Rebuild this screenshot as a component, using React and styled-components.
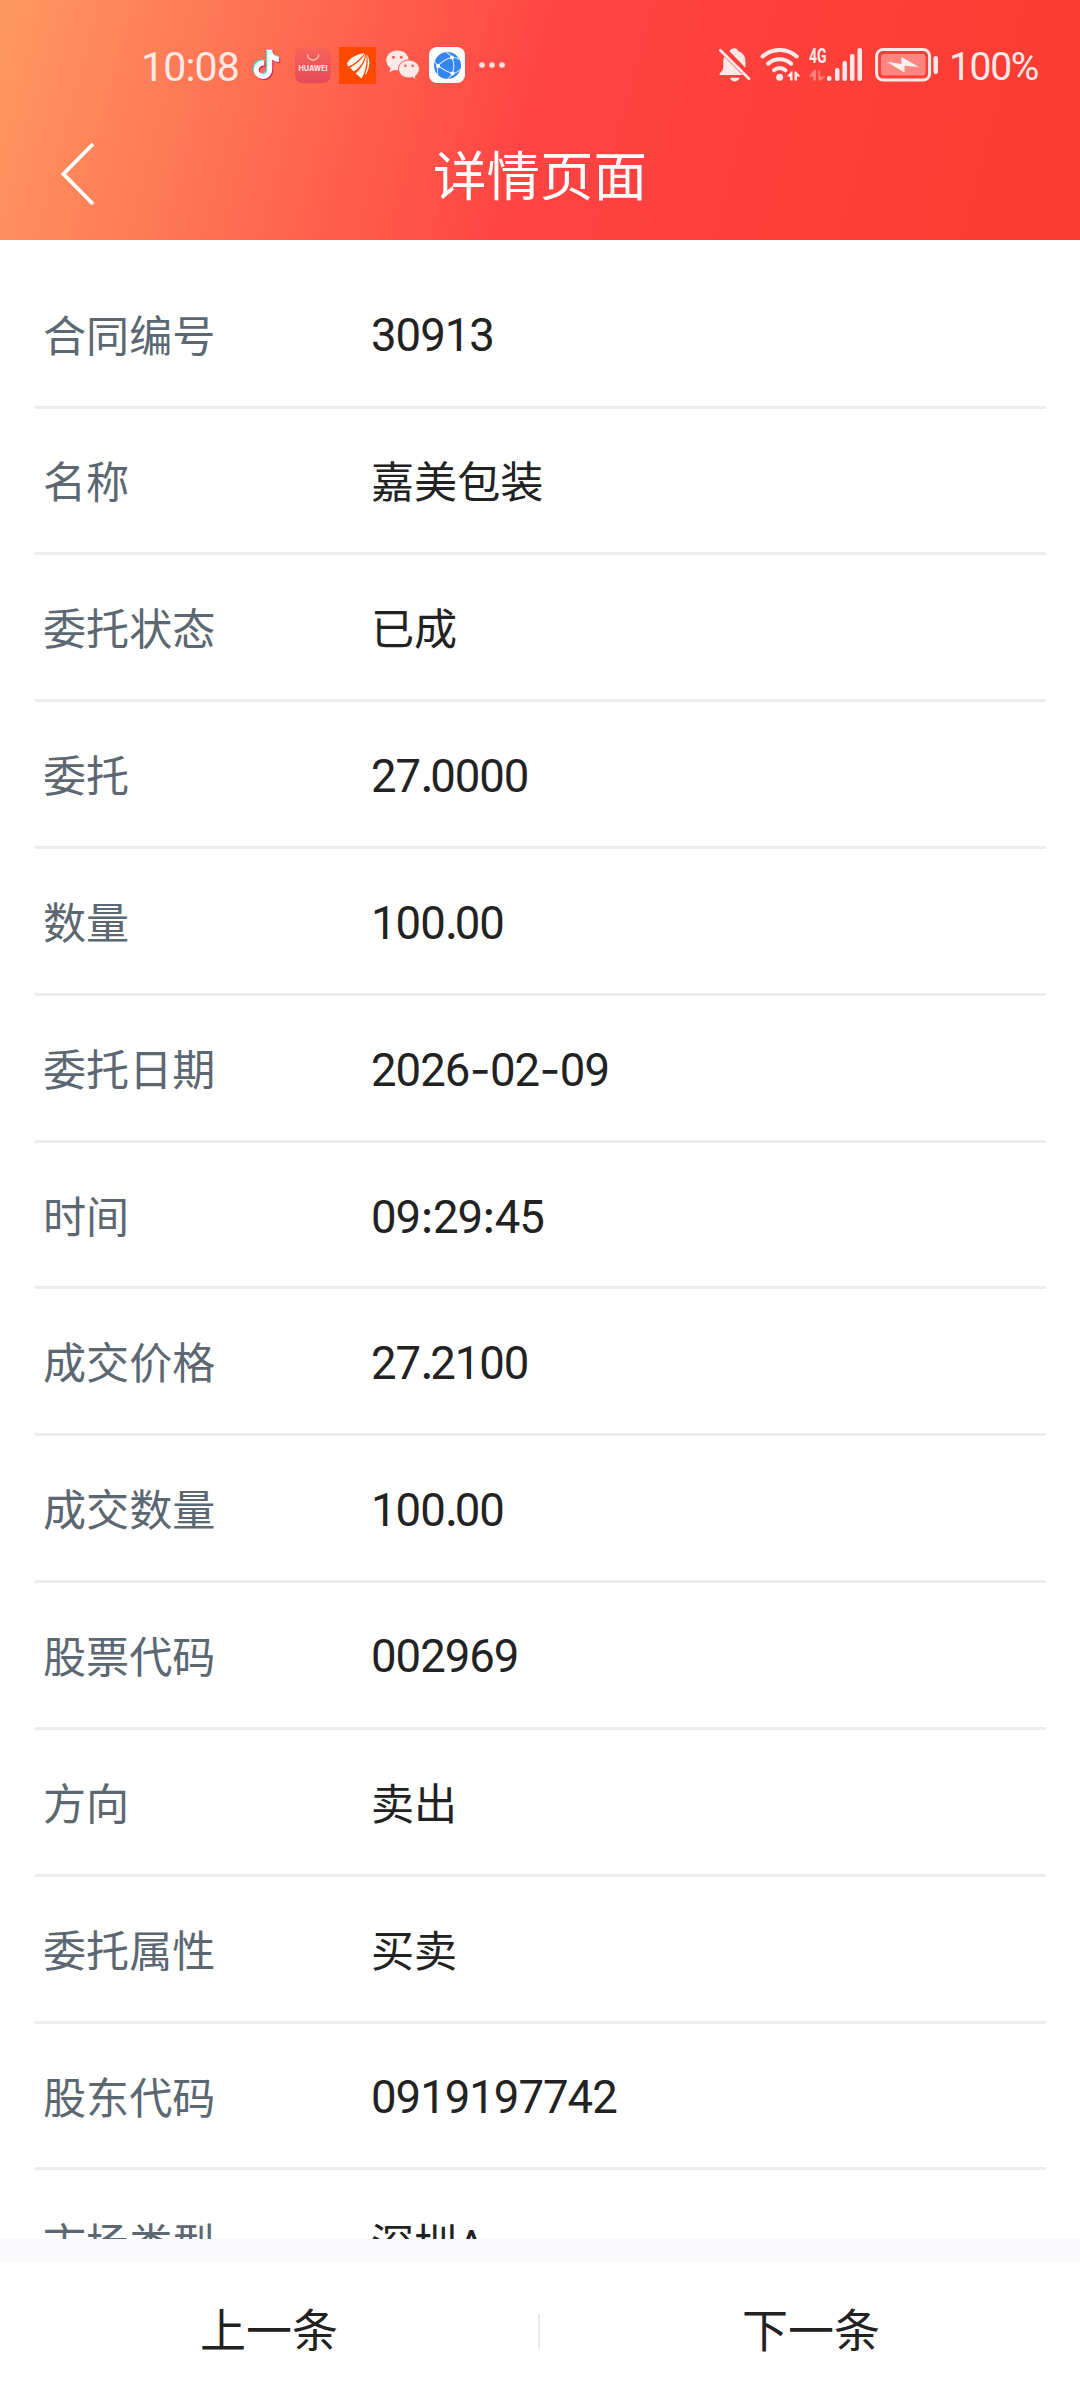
import React from 'react';
import styled, { createGlobalStyle } from 'styled-components';
import { FaTiktok } from 'react-icons/fa';

const details = [
    { label: '合同编号', value: '30913' },
    { label: '名称', value: '嘉美包装' },
    { label: '委托状态', value: '已成' },
    { label: '委托', value: '27.0000' },
    { label: '数量', value: '100.00' },
    { label: '委托日期', value: '2026-02-09' },
    { label: '时间', value: '09:29:45' },
    { label: '成交价格', value: '27.2100' },
    { label: '成交数量', value: '100.00' },
    { label: '股票代码', value: '002969' },
    { label: '方向', value: '卖出' },
    { label: '委托属性', value: '买卖' },
    { label: '股东代码', value: '0919197742' },
    { label: '市场类型', value: '深圳A' },
];

const HuaweiIcon = () => (
    <svg width="36" height="36" viewBox="0 0 36 36">
        <defs>
            <linearGradient id="huawei" x1="0" y1="0" x2="0" y2="1">
                <stop offset="0" stopColor="#f8655a" />
                <stop offset="1" stopColor="#e54a58" />
            </linearGradient>
        </defs>
        <rect width="36" height="36" rx="8" fill="url(#huawei)" />
        <path d="M12.5 7.5a5.6 5.6 0 0 0 11.2 0" fill="none" stroke="#ffc9c4" strokeWidth="1.3" />
        <text x="3.5" y="24" textLength="29" lengthAdjust="spacingAndGlyphs" fill="#ffe9e6" fontFamily="Inter, sans-serif" fontWeight="700" fontSize="7">HUAWEI</text>
    </svg>
);

const BrokerIcon = () => (
    <svg width="37" height="37" viewBox="0 0 37 37">
        <rect width="37" height="37" fill="#ff4800" />
        <path d="M25.500 6C19 7 11 10 8 16.500L9 19.500C14 18 21 12.500 25.500 6Z" fill="#fff6ee" />
        <path d="M26.300 6.500C23.500 12 17 17.500 11 20.500L14.500 24.500C20.500 21.500 25.500 14.500 26.300 6.500Z" fill="#fff6ee" />
        <path d="M27.200 7C26.500 14.500 22 22 16.500 26.500L22.500 31.500C26.500 25 28.500 15.500 27.200 7Z" fill="#fff6ee" />
        <path d="M28 7.500C29.500 14 28.500 22 25.800 28L27.500 26.500C31 20 31.500 13 28 7.500Z" fill="#fff6ee" />
    </svg>
);

const WechatIcon = () => (
    <svg width="34" height="30" viewBox="0 0 34 30">
        <path d="M11.500.5C5.200.5.300 4.800.300 10.300c0 3.200 1.600 5.900 4.200 7.700l-1.200 4.200 4.600-2.300c1.200.3 2.400.4 3.600.4 6.200 0 11.200-4.400 11.200-10S17.700.5 11.500.5Z" fill="#ffe9e6" />
        <path d="M23 10c-5.800 0-10.500 4-10.500 9s4.700 9 10.500 9c1.200 0 2.300-.2 3.300-.5l4 2-1-3.400c2.500-1.600 4.100-4.200 4.100-7.100 0-5-4.600-9-10.400-9Z" fill="#ffe9e6" stroke="#ff5a4c" strokeWidth="1" />
        <g fill="#ff5a4c">
            <circle cx="7.500" cy="7.300" r="1.500" />
            <circle cx="15.300" cy="7.300" r="1.500" />
            <circle cx="19.300" cy="15.700" r="1.300" />
            <circle cx="26.600" cy="15.700" r="1.300" />
        </g>
    </svg>
);

const BrowserIcon = () => (
    <svg width="36" height="36" viewBox="0 0 36 36">
        <rect width="36" height="36" rx="8" fill="#fff" />
        <circle cx="18.500" cy="18.500" r="13.500" fill="#3385f0" />
        <g fill="none" stroke="#d5e7ff" strokeWidth="1.100">
            <path d="M9 19C13 14 18 11.500 23 10.500" />
            <path d="M9 19C13 21.500 18 25 23.500 26.500" />
            <path d="M23 10.500C25 15 25.500 21 23.500 26.500" />
            <path d="M9 19C7 16.500 6 15 5.600 14.500M9 19C8 22 8 25 9 28" />
            <path d="M23 10.500C21 7.500 19 6 17 5M23 10.500C27 10.300 29 11 30.500 12.500" />
            <path d="M23.500 26.500C27 26 29.500 24.500 31 22.500M23.500 26.500C22 29 20.500 31 18.500 32" />
        </g>
        <g fill="#fff">
            <circle cx="9" cy="19" r="2" />
            <circle cx="23" cy="10.500" r="2" />
            <circle cx="23.500" cy="26.500" r="2" />
        </g>
    </svg>
);

const MuteIcon = () => (
    <svg width="32" height="34" viewBox="0 0 32 34">
        <path d="M10.500 3.300C11.500 1 13.500 .3 15.500.3s3 .9 3.600 2.700c5 1.700 7.400 5.500 7.400 10.500v6.300ZM5.200 8.500 23.500 27H.8C.3 26 .8 25 2 24c1.700-1.600 2.300-3 2.300-6V13c0-1.300.300-2.900.9-4.500Z" fill="#ffe9e8" />
        <path d="M1.300 2.300 30 30.800" stroke="#ffe9e8" strokeWidth="2.700" strokeLinecap="round" />
        <path d="M11 29.800h9.500c-.8 2.600-2.500 3.700-4.700 3.700s-4-1.100-4.800-3.700Z" fill="#ffe9e8" />
    </svg>
);

const WifiIcon = () => (
    <svg width="41" height="34" viewBox="0 0 41 34">
        <g fill="none" stroke="#ffe9e8" strokeWidth="4" strokeLinecap="round">
            <path d="M2.500 8.500C12.500-.2 27 -.2 36.800 8.500" />
            <path d="M8 15.700c7-6 16.300-6 23.300 0" />
            <path d="M14 22.300c3.500-3 8-3 11.500 0" />
        </g>
        <circle cx="19.600" cy="29.300" r="3.500" fill="#ffe9e8" />
        <path d="M27 28.500 31 23.500h1.500v9H30v-4ZM34.500 23.500H36l4.500 5H37v4h-2.500Z" fill="#ffe9e8" />
    </svg>
);

const SignalIcon = () => (
    <svg width="54" height="34" viewBox="0 0 54 34" overflow="visible">
        <text x="0" y="15" textLength="17.500" lengthAdjust="spacingAndGlyphs" fill="#ffe9e8" fontFamily="Roboto, sans-serif" fontWeight="700" fontSize="20">4G</text>
        <path d="M0 28.500 5 22h2v10.500H4.200v-4ZM9.500 22H11v6.500h5.500L11.500 32.500h-2Z" fill="#fff" opacity=".35" />
        <g fill="#ffe9e8">
            <rect x="18" y="28" width="4.500" height="5" rx="2" />
            <rect x="26" y="20" width="4.500" height="13" rx="2" />
            <rect x="33.500" y="13" width="4.500" height="20" rx="2" />
            <rect x="41" y="6" width="4.500" height="27" rx="2" />
            <rect x="48.500" y="0" width="4.500" height="33" rx="2" />
        </g>
    </svg>
);

const BatteryIcon = () => (
    <svg width="64" height="34" viewBox="0 0 64 34">
        <rect x="1.600" y="1.600" width="53" height="30.500" rx="6.500" fill="none" stroke="#ffe9e8" strokeWidth="3" />
        <rect x="6" y="6" width="44.500" height="21.500" rx="3" fill="#ff8580" />
        <path d="M11.500 13.700 26.500 16V9L44 19 29.500 17.800V24.500Z" fill="#ffefee" />
        <rect x="58.500" y="8" width="4.500" height="18" rx="2.200" fill="#ffe9e8" />
    </svg>
);

// widths of the punctuation between digits, in em
const marks = { '.': 0.220, ':': 0.280, '-': 0.455 };

const Numeric = ({ text }) => (
    <Digits>
        {text.split(/([-:.])/).map((part, idx) => (
            marks[part] ? <Mark key={idx} $width={marks[part]}>{part}</Mark> : part
        ))}
    </Digits>
);

const Value = ({ text }) => (
    <ValueText>
        {/^[\d.:-]+$/.test(text) ? <Numeric text={text} /> : text}
    </ValueText>
);

const App = () => {
    return (
        <Page>
            <GlobalStyle />
            <Header>
                <StatusBar>
                    <Side>
                        <Clock>10:08</Clock>
                        <Slot $gap={15}>
                            <Tiktok>
                                <FaTiktok color="#25f4ee" />
                                <FaTiktok color="#d8174e" />
                                <FaTiktok color="#fff" />
                            </Tiktok>
                        </Slot>
                        <Slot $gap={14}><HuaweiIcon /></Slot>
                        <Slot $gap={8}><BrokerIcon /></Slot>
                        <Slot $gap={10}><WechatIcon /></Slot>
                        <Slot $gap={9}><BrowserIcon /></Slot>
                        <Slot $gap={14}>
                            <svg width="26" height="6" viewBox="0 0 26 6" fill="#ffe4e2">
                                <circle cx="3" cy="3" r="2.800" />
                                <circle cx="13" cy="3" r="2.800" />
                                <circle cx="23" cy="3" r="2.800" />
                            </svg>
                        </Slot>
                    </Side>
                    <Side>
                        <MuteIcon />
                        <Slot $gap={9}><WifiIcon /></Slot>
                        <Slot $gap={8}><SignalIcon /></Slot>
                        <Slot $gap={12}><BatteryIcon /></Slot>
                        <Percent>100%</Percent>
                    </Side>
                </StatusBar>
                <NavBar>
                    <BackButton>
                        <svg width="34" height="62" viewBox="0 0 34 62">
                            <path d="M32 1 2.500 31 32 61" fill="none" stroke="#fff" strokeWidth="3.800" />
                        </svg>
                    </BackButton>
                    <Title>详情页面</Title>
                </NavBar>
            </Header>
            <List>
                {details.map((d, idx) => (
                    <Row key={idx}>
                        <Label>{d.label}</Label>
                        <Value text={d.value} />
                    </Row>
                ))}
            </List>
            <Footer>
                <FooterButton>上一条</FooterButton>
                <Divider />
                <FooterButton>下一条</FooterButton>
            </Footer>
        </Page>
    );
}

const GlobalStyle = createGlobalStyle`
  body {
    margin: 0;
    background-color: #fff;
  }
`;

const Page = styled.div`
  display: flex;
  flex-direction: column;
  width: 1080px;
  height: 2400px;
  overflow: hidden;
  background-color: #fff;
  font-family: Roboto, 'Noto Sans CJK SC', sans-serif;
`;

const Header = styled.div`
  flex: none;
  height: 240px;
  color: #fff;
  background: linear-gradient(105deg, #ff9860 0%, #ff4343 50%, #fa3b2f 100%);
`;

const StatusBar = styled.div`
  display: flex;
  justify-content: space-between;
  align-items: center;
  box-sizing: border-box;
  height: 108px;
  padding: 22px 42px 0 141px;
`;

const Side = styled.div`
  display: flex;
  align-items: center;
  & svg {
    display: block;
    flex: none;
  }
`;

const Slot = styled.div`
  flex: none;
  margin-left: ${(props) => props.$gap}px;
`;

const Digits = styled.span`
  display: inline-block;
  white-space: nowrap;
`;

const Mark = styled.span`
  display: inline-block;
  width: ${(props) => props.$width}em;
  font-family: Inter, sans-serif;
  text-align: center;
`;

const Clock = styled.div`
  width: 97px;
  padding-top: 4px;
  color: #ffe9e6;
  font-size: 41px;
  line-height: 48px;
  letter-spacing: -0.800px;
  white-space: nowrap;
`;

const Percent = styled.div`
  width: 89px;
  margin-left: 10px;
  padding-top: 4px;
  color: #ffe9e8;
  font-size: 39px;
  line-height: 48px;
  letter-spacing: -1.300px;
  white-space: nowrap;
`;

const Tiktok = styled.div`
  display: grid;
  width: 28px;
  height: 30px;
  & > svg {
    grid-area: 1 / 1;
    width: 27px;
    height: 29px;
    transform: translate(0, 0);
  }
  & > svg:nth-child(1) {
    transform: translate(-1px, -1px);
  }
  & > svg:nth-child(2) {
    transform: translate(1px, 1px);
  }
`;

const NavBar = styled.div`
  display: grid;
  grid-template-columns: 160px 1fr 160px;
  align-items: center;
  height: 132px;
`;

const BackButton = styled.div`
  padding-left: 61px;
  & > svg {
    display: block;
  }
`;

const Title = styled.div`
  padding-bottom: 4px;
  font-size: 53.500px;
  text-align: center;
`;

const List = styled.div`
  flex: none;
  box-sizing: border-box;
  height: 1999px;
  padding: 21.700px 34px 0 35px;
  overflow: hidden;
`;

const Row = styled.div`
  display: flex;
  align-items: center;
  box-sizing: border-box;
  height: 146.830px;
  padding-left: 8px;
  border-bottom: 3px solid #eceeee;
`;

const Label = styled.div`
  width: 328px;
  padding-bottom: 2px;
  color: #5b6872;
  font-size: 43.100px;
`;

const ValueText = styled.div`
  padding-bottom: 2px;
  color: #222;
  font-size: 43.100px;
  & > ${Digits} {
    padding-top: 5px;
    font-size: 45.500px;
    letter-spacing: -1px;
  }
`;

const Footer = styled.div`
  display: flex;
  align-items: center;
  box-sizing: border-box;
  height: 161px;
  border-top: 23px solid #f9f9fb;
`;

const FooterButton = styled.div`
  flex: 1;
  padding-bottom: 8px;
  color: #222;
  font-size: 46px;
  text-align: center;
`;

const Divider = styled.div`
  width: 2px;
  height: 35px;
  margin-right: 2px;
  background-color: #e8eaea;
`;

export default App;
